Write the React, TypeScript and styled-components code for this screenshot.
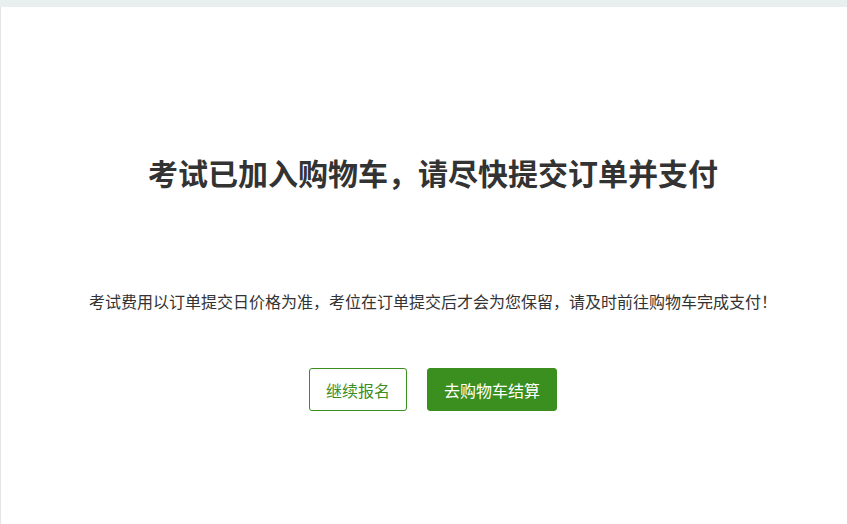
import styled, { createGlobalStyle } from 'styled-components';

const GlobalStyle = createGlobalStyle`
  html,
  body {
    margin: 0;
    padding: 0;
    background: #ffffff;
  }

  body {
    font-family: 'Noto Sans CJK SC', 'Liberation Sans', sans-serif;
    color: #333333;
  }
`;

const App = () => {
  return (
    <>
      <GlobalStyle />
      <Page>
        <TopBar />
        <Panel>
          <Title>考试已加入购物车，请尽快提交订单并支付</Title>
          <Notice>
            考试费用以订单提交日价格为准，考位在订单提交后才会为您保留，请及时前往购物车完成支付！
          </Notice>
          <ButtonRow>
            <ActionButton type="button">继续报名</ActionButton>
            <ActionButton type="button" $primary>
              去购物车结算
            </ActionButton>
          </ButtonRow>
        </Panel>
      </Page>
    </>
  );
};

export default App;

const Page = styled.div`
  display: flex;
  flex-direction: column;
  height: 524px;
  background: #e9eeee;
`;

const TopBar = styled.div`
  flex: 0 0 7px;
`;

const Panel = styled.main`
  flex: 1;
  display: flex;
  flex-direction: column;
  align-items: center;
  padding-left: 18px;
  background: #ffffff;
  border-left: 1px solid #e3e6e6;
`;

const Title = styled.h1`
  margin: 143px 0 0;
  font-size: 30px;
  font-weight: 700;
  line-height: 45px;
  color: #333333;
`;

const Notice = styled.p`
  margin: 94px 0 0;
  font-size: 16px;
  line-height: 24px;
  color: #333333;
`;

const ButtonRow = styled.div`
  display: flex;
  gap: 20px;
  margin-top: 55px;
`;

const ActionButton = styled.button<{ $primary?: boolean }>`
  height: 43px;
  padding: 0 16px;
  border: 1px solid #3b8f1f;
  border-radius: 3px;
  background: ${({ $primary }) => ($primary ? '#3b8f1f' : '#ffffff')};
  color: ${({ $primary }) => ($primary ? '#ffffff' : '#3b8f1f')};
  font-family: 'Noto Sans CJK SC', 'Liberation Sans', sans-serif;
  font-size: 16px;
  cursor: pointer;
`;
